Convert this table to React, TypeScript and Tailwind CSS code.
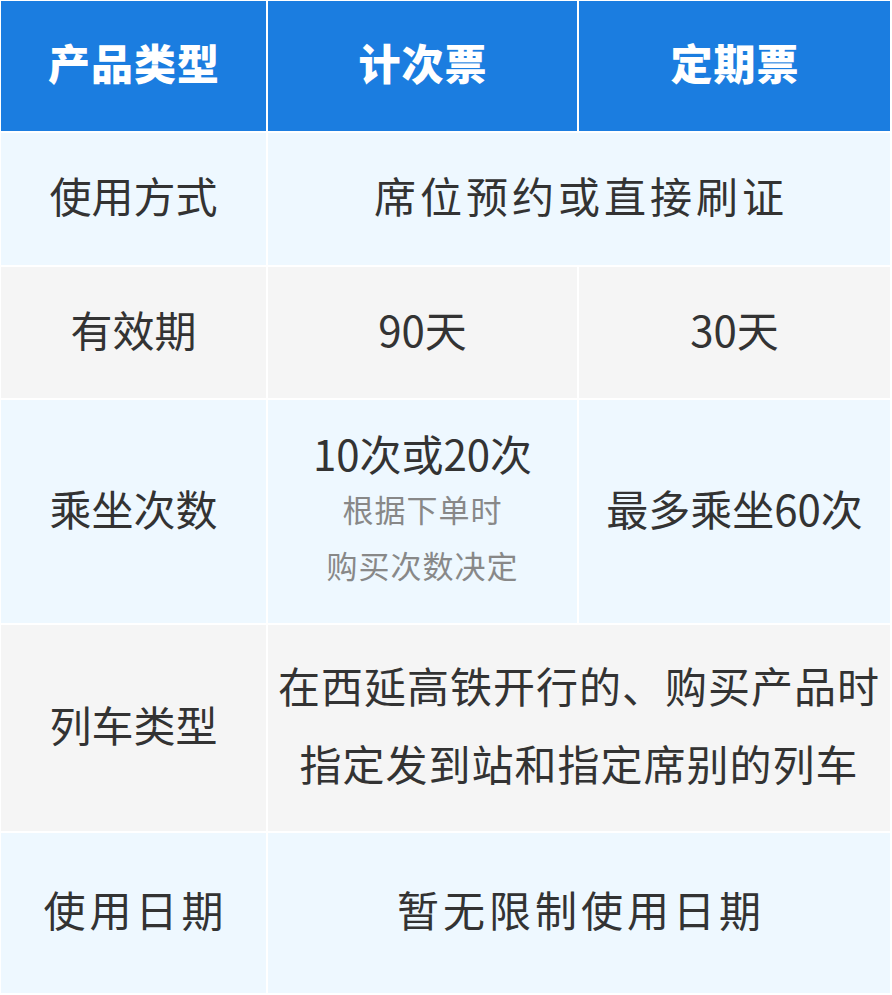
const font = { fontFamily: '"Noto Sans CJK SC", "Noto Sans", sans-serif' };

function Cell({
  children,
  className = "",
}: {
  children: React.ReactNode;
  className?: string;
}) {
  return (
    <div className={`flex flex-col items-center justify-center text-center pb-[8px] ${className}`}>
      {children}
    </div>
  );
}

export default function App() {
  const blue = "bg-[#1b7de0]";
  const light = "bg-[#eef8ff]";
  const gray = "bg-[#f5f5f5]";

  return (
    <div
      className="w-[892px] h-[995px] bg-white pl-[1px] pt-[1px] text-[#333333] text-[42px] leading-none"
      style={font}
    >
      <div className="grid grid-cols-[265px_309px_311px] grid-rows-[130px_132px_131px_223px_206px_160px] gap-[2px]">
        {/* header */}
        <Cell className={`${blue} text-white font-black tracking-[1px] pl-[1px]`}>产品类型</Cell>
        <Cell className={`${blue} text-white font-black tracking-[1px] pl-[1px]`}>计次票</Cell>
        <Cell className={`${blue} text-white font-black tracking-[1px] pl-[1px]`}>定期票</Cell>

        {/* 使用方式 */}
        <Cell className={light}>使用方式</Cell>
        <Cell className={`${light} col-span-2 tracking-[4px] pl-[4px]`}>席位预约或直接刷证</Cell>

        {/* 有效期 */}
        <Cell className={gray}>有效期</Cell>
        <Cell className={gray}>90天</Cell>
        <Cell className={gray}>30天</Cell>

        {/* 乘坐次数 */}
        <Cell className={light}>乘坐次数</Cell>
        <Cell className={light}>
          <div className="leading-[60px] mb-[-2px]">10次或20次</div>
          <div className="text-[31px] leading-[56px] text-[#888888] tracking-[1px]">根据下单时</div>
          <div className="text-[31px] leading-[56px] text-[#888888] tracking-[1px]">购买次数决定</div>
        </Cell>
        <Cell className={light}>最多乘坐60次</Cell>

        {/* 列车类型 */}
        <Cell className={gray}>列车类型</Cell>
        <Cell className={`${gray} col-span-2 tracking-[1px]`}>
          <div className="leading-[78px]">在西延高铁开行的、购买产品时</div>
          <div className="leading-[78px]">指定发到站和指定席别的列车</div>
        </Cell>

        {/* 使用日期 */}
        <Cell className={`${light} tracking-[4px] pl-[4px]`}>使用日期</Cell>
        <Cell className={`${light} col-span-2 tracking-[4px] pl-[4px]`}>暂无限制使用日期</Cell>
      </div>
    </div>
  );
}
